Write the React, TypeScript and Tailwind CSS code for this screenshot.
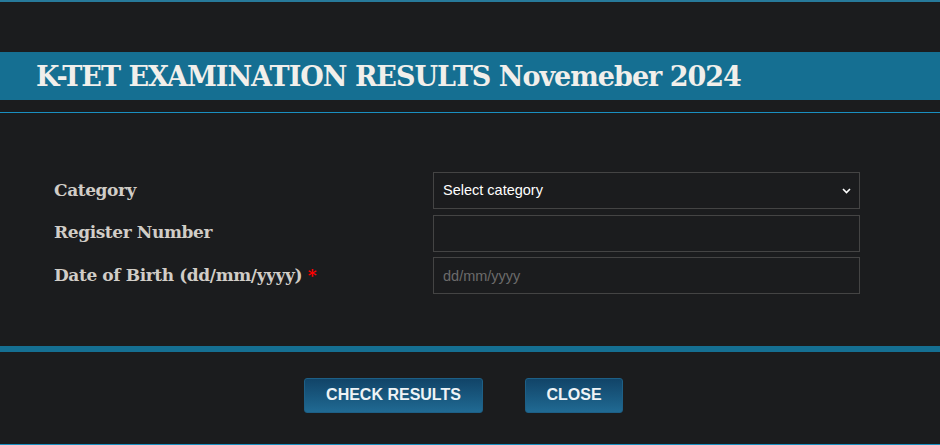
export default function App() {
  const labelCls =
    "text-[17px] font-bold tracking-[-0.4px] text-[#d1cdc7] [font-family:Georgia,'DejaVu_Serif',serif]"
  const fieldCls =
    "h-[37px] w-[427px] border border-[#444] bg-[#1b1c1e] px-[9px] text-[14.5px] text-white outline-none [font-family:'Liberation_Sans',Arial,sans-serif] placeholder:text-[#6b6b6b]"
  const btnCls =
    "h-[35px] rounded-[3px] border border-[#1d5f86] bg-gradient-to-b from-[#114468] to-[#206a93] text-[16px] font-bold text-[#eef3f6] [font-family:'Liberation_Sans',Arial,sans-serif]"

  return (
    <div className="flex h-[445px] w-[940px] flex-col overflow-hidden bg-[#1b1c1e]">
      <div className="h-[2px] bg-[#277a9b]" />

      <div className="mt-[50px] flex h-[48px] items-center bg-[#156f92] pl-[36px]">
        <h1 className="text-[27px] font-bold leading-none tracking-[-1px] text-[#f1efeb] [font-family:Georgia,'DejaVu_Serif',serif]">
          K-TET EXAMINATION RESULTS Novemeber 2024
        </h1>
      </div>

      <div className="mt-[12px] h-px bg-[#1a8fc0]" />

      <div className="mt-[59px] flex flex-col gap-[5.5px] pl-[54px] pr-[80px]">
        <div className="flex items-center justify-between">
          <label className={labelCls}>Category</label>
          <div className="relative">
            <select className={`${fieldCls} appearance-none`} defaultValue="">
              <option value="">Select category</option>
            </select>
            <svg
              className="pointer-events-none absolute right-[9px] top-[16px]"
              width="9"
              height="6"
              viewBox="0 0 9 6"
              fill="none"
              stroke="#fff"
              strokeWidth="1.6"
            >
              <path d="M1 1l3.5 3.5L8 1" />
            </svg>
          </div>
        </div>
        <div className="flex items-center justify-between">
          <label className={labelCls}>Register Number</label>
          <input className={fieldCls} />
        </div>
        <div className="flex items-center justify-between">
          <label className={labelCls}>
            Date of Birth (dd/mm/yyyy) <span className="text-[#ff0000]">*</span>
          </label>
          <input className={fieldCls} placeholder="dd/mm/yyyy" />
        </div>
      </div>

      <div className="mt-[52px] h-[6px] bg-[#156f92]" />

      <div className="flex flex-1 items-center justify-center gap-[42px] pb-[6px] pr-[13px]">
        <button className={`${btnCls} w-[179px]`}>CHECK RESULTS</button>
        <button className={`${btnCls} w-[98px]`}>CLOSE</button>
      </div>

      <div className="h-px bg-[#1a8fc0]" />
    </div>
  )
}
